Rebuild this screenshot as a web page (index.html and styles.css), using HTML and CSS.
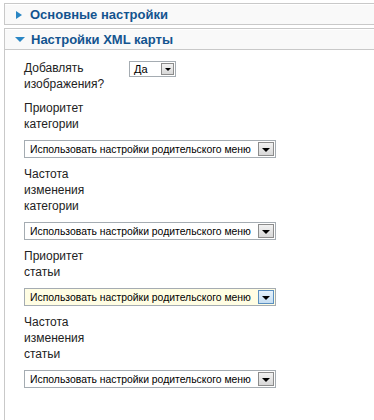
FILE: index.html
```html
<!DOCTYPE html>
<html lang="ru">
<head>
  <meta charset="UTF-8">
  <meta name="viewport" content="width=device-width, initial-scale=1.0">
  <title>Настройки XML карты</title>
  <link rel="stylesheet" href="styles.css">
</head>
<body>

  <div class="pane">
    <h3 class="toggler"><span class="arrow right"></span>Основные настройки</h3>
  </div>

  <div class="pane">
    <h3 class="toggler"><span class="arrow down"></span>Настройки XML карты</h3>
    <div class="pane-body">

      <div class="param inline">
        <div class="param-label">Добавлять изображения?</div>
        <div class="select short">
          <span class="select-text">Да</span>
          <span class="select-btn"></span>
        </div>
      </div>

      <div class="param">
        <div class="param-label">Приоритет категории</div>
        <div class="select wide">
          <span class="select-text">Использовать настройки родительского меню</span>
          <span class="select-btn"></span>
        </div>
      </div>

      <div class="param">
        <div class="param-label">Частота изменения категории</div>
        <div class="select wide">
          <span class="select-text">Использовать настройки родительского меню</span>
          <span class="select-btn"></span>
        </div>
      </div>

      <div class="param">
        <div class="param-label">Приоритет статьи</div>
        <div class="select wide focused">
          <span class="select-text">Использовать настройки родительского меню</span>
          <span class="select-btn"></span>
        </div>
      </div>

      <div class="param">
        <div class="param-label">Частота изменения статьи</div>
        <div class="select wide">
          <span class="select-text">Использовать настройки родительского меню</span>
          <span class="select-btn"></span>
        </div>
      </div>

    </div>
  </div>

</body>
</html>
```

FILE: styles.css
```css
body {
  margin: 0;
  background: #ffffff;
  font-family: "Liberation Sans", Arial, sans-serif;
  color: #222;
}
.pane {
  margin: 3px 0 0 4px;
  border: 1px solid #c9c9c9;
  border-right: none;
}
.toggler {
  display: flex;
  align-items: center;
  margin: 0;
  height: 20px;
  padding-left: 11px;
  background: #f9f9f9;
  border-top: 1px solid #ffffff;
  box-sizing: border-box;
  font-size: 13px;
  font-weight: bold;
  color: #13548f;
}
.arrow {
  width: 0;
  height: 0;
  margin-right: 8px;
}
.arrow.right {
  border-top: 4px solid transparent;
  border-bottom: 4px solid transparent;
  border-left: 6px solid #2a86c4;
}
.arrow.down {
  margin-left: -1px;
  margin-right: 6px;
  border-left: 5px solid transparent;
  border-right: 5px solid transparent;
  border-top: 5px solid #2a86c4;
}
.pane-body {
  border-top: 1px solid #c9c9c9;
  padding: 10px 0 40px 19px;
}
.param {
  display: flex;
  flex-direction: column;
  align-items: flex-start;
  gap: 8px;
  margin-bottom: 8px;
}
.param.inline {
  flex-direction: row;
  gap: 15px;
}
.param-label {
  width: 90px;
  font-size: 12px;
  line-height: 16px;
}
.select {
  display: flex;
  align-items: center;
  box-sizing: border-box;
  border: 1px solid #a5acb2;
  background: #ffffff;
  font-size: 11px;
  color: #000;
}
.select.short {
  width: 47px;
  height: 16px;
  margin-top: 1px;
}
.select.wide {
  width: 252px;
  height: 18px;
  font-size: 10.4px;
}
.select.focused {
  background: #fffde3;
}
.select-text {
  flex: 1;
  padding-left: 5px;
  white-space: nowrap;
}
.select.short .select-text {
  padding-left: 4px;
}
.select-btn {
  position: relative;
  flex-shrink: 0;
  width: 16px;
  height: 14px;
  margin-right: 1px;
  box-sizing: border-box;
  border: 1px solid #8c8c8c;
  background: linear-gradient(#f2f2f2, #d8d8d8);
}
.select.short .select-btn {
  width: 13px;
  height: 12px;
}
.select.focused .select-btn {
  border-color: #5a8fc0;
  background: linear-gradient(#e6f2fb, #c6def2);
}
.select-btn::after {
  content: "";
  position: absolute;
  left: 50%;
  top: 50%;
  margin: -1px 0 0 -4px;
  border-left: 4px solid transparent;
  border-right: 4px solid transparent;
  border-top: 4px solid #000;
}
.select.short .select-btn::after {
  margin-left: -3px;
  border-left-width: 3px;
  border-right-width: 3px;
  border-top-width: 3px;
}
```
